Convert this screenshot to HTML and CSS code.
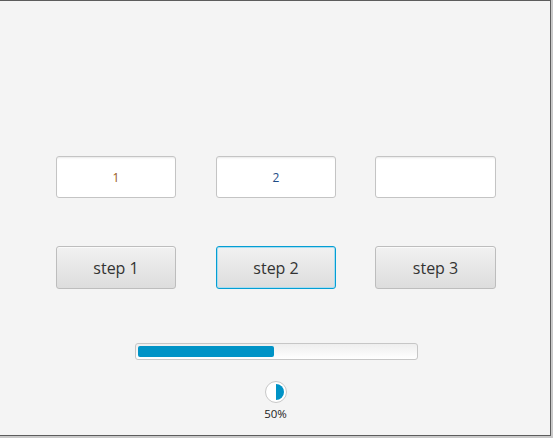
FILE: index.html
```html
<!DOCTYPE html>
<html>
<head>
<meta charset="utf-8">
<link rel="stylesheet" href="styles.css">
</head>
<body>
<div class="window">
  <div class="grid">
    <div class="field"><span class="t1">1</span></div>
    <div class="field"><span class="t2">2</span></div>
    <div class="field"></div>
  </div>
  <div class="grid buttons">
    <div class="btn">step 1</div>
    <div class="btn focused">step 2</div>
    <div class="btn">step 3</div>
  </div>
  <div class="progress-row">
    <div class="progress"><div class="bar" style="width:49%"></div></div>
  </div>
  <div class="indicator-row">
    <div class="pie"><div class="half"></div></div>
    <div class="pct">50%</div>
  </div>
</div>
</body>
</html>
```
FILE: styles.css
```css
html { background: #c9c9c9; }
body { margin: 0; font-family: "Open Sans", "Noto Sans", sans-serif; }
.window {
  width: 551px;
  height: 436px;
  background: #f4f4f4;
  border-top: 1px solid #5c5c5c;
  border-right: 1px solid #5c5c5c;
  border-bottom: 1px solid #5c5c5c;
  padding-top: 155px;
  box-sizing: border-box;
}
.grid {
  display: grid;
  grid-template-columns: 120px 120px 120px;
  column-gap: 40px;
  padding-left: 56px;
}
.grid .field:last-child, .grid .btn:last-child { margin-left: -1px; }
.field {
  height: 42px;
  box-sizing: border-box;
  background: #fff;
  border: 1px solid #c4c4c4;
  border-radius: 3px;
  box-shadow: inset 0 2px 2px -1px #e8e8e8;
  display: flex;
  align-items: center;
  justify-content: center;
  font-size: 12px;
  padding-top: 1px;
}
.t1 { color: #97591a; }
.t2 { color: #1e4c86; }
.buttons { margin-top: 48px; }
.btn {
  height: 43px;
  box-sizing: border-box;
  border: 1px solid #bdbdbd;
  border-radius: 3px;
  background: linear-gradient(#f1f1f1, #dddddd);
  box-shadow: inset 0 1px 0 #fafafa;
  display: flex;
  align-items: center;
  justify-content: center;
  font-size: 16px;
  color: #333;
}
.btn.focused {
  border: 1px solid #039ed3;
  box-shadow: inset 0 0 0 1px #a8dcf0;
}
.progress-row {
  display: flex;
  padding-left: 135px;
  margin-top: 54px;
}
.progress {
  width: 283px;
  height: 17px;
  box-sizing: border-box;
  border: 1px solid #c6c6c6;
  border-radius: 3px;
  background: linear-gradient(#eeeeee, #ffffff);
  padding: 2px;
}
.bar {
  height: 11px;
  background: #0093c6;
  border-radius: 2px;
}
.indicator-row {
  display: flex;
  flex-direction: column;
  align-items: center;
  margin-top: 21px;
  padding-left: 1px;
}
.pie {
  width: 22px;
  height: 22px;
  box-sizing: border-box;
  border: 1px solid #c8c8c8;
  border-radius: 50%;
  background: #fff;
  padding: 2px;
  display: flex;
  justify-content: flex-end;
}
.half {
  width: 8px;
  height: 16px;
  background: #0093c6;
  border-radius: 0 8px 8px 0;
}
.pct {
  font-size: 11.5px;
  color: #222;
  margin-top: 3px;
  line-height: 15px;
}
```
